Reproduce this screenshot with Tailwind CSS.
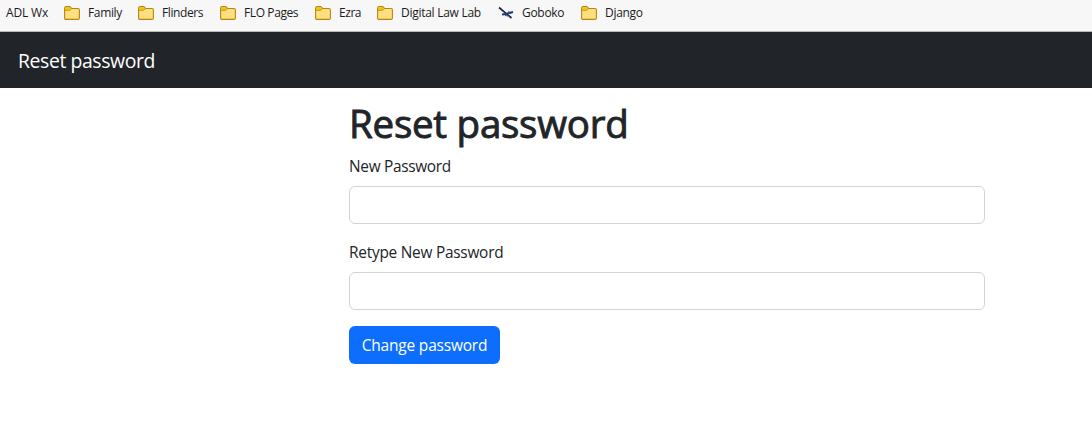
<!DOCTYPE html>
<html lang="en">
<head>
<meta charset="utf-8">
<title>Reset password</title>
<script src="https://cdn.jsdelivr.net/npm/@tailwindcss/browser@4"></script>
</head>
<body class="h-[421px] overflow-hidden bg-white font-['Open_Sans','Noto_Sans',sans-serif] text-[#212529]">
<svg class="hidden">
  <symbol id="folder" viewBox="0 0 16 14">
    <path d="M.6 2.2Q.6.6 2 .6h3.800L7.600 2.500H14q1.400 0 1.400 1.400v8q0 1.500-1.400 1.500H2Q.6 13.400 .6 12Z" fill="#ffdf80" stroke="#b8860b" stroke-width="1.100"/>
    <path d="M1.100 2.200Q1.100 1.100 2 1.100h3.600L7 2.600 5.700 4.100H1.100Z" fill="#f0c419"/>
    <path d="M.8 4.300h4.900L7.500 2.600" fill="none" stroke="#b8860b" stroke-width=".8"/>
  </symbol>
</svg>
<nav class="flex h-8 items-center border-b border-[#b9bab8] bg-[#f7f7f7] pb-[5px] pl-1.5 text-[12px] leading-4 whitespace-nowrap text-[#1b1b1b]">
  <div class="w-[58px] tracking-[-0.15px]">ADL Wx</div>
  <div class="flex w-[74px] items-center gap-2"><svg class="h-3.5 w-4 shrink-0"><use href="#folder"/></svg><span class="tracking-[-0.35px]">Family</span></div>
  <div class="flex w-[82px] items-center gap-2"><svg class="h-3.5 w-4 shrink-0"><use href="#folder"/></svg><span class="tracking-[-0.4px]">Flinders</span></div>
  <div class="flex w-[95px] items-center gap-2"><svg class="h-3.5 w-4 shrink-0"><use href="#folder"/></svg><span class="tracking-[-0.4px]">FLO Pages</span></div>
  <div class="flex w-[62px] items-center gap-2"><svg class="h-3.5 w-4 shrink-0"><use href="#folder"/></svg><span class="tracking-[-0.45px]">Ezra</span></div>
  <div class="flex w-[121px] items-center gap-2"><svg class="h-3.5 w-4 shrink-0"><use href="#folder"/></svg><span class="tracking-[-0.27px]">Digital Law Lab</span></div>
  <div class="flex w-[83px] items-center gap-2">
    <svg class="h-3.5 w-4 shrink-0" viewBox="0 0 16 14"><path d="M1 1.500 13.500 12" stroke="#1c2540" stroke-width="1.700"/><path d="M4 8.500 8 8 15 6" fill="none" stroke="#21396f" stroke-width="2.200"/><path d="m10.500 4.800 2 3.200M7 9.500l3 .5" stroke="#34518c"/></svg>
    <span class="tracking-[-0.3px]">Goboko</span></div>
  <div class="flex items-center gap-2"><svg class="h-3.5 w-4 shrink-0"><use href="#folder"/></svg><span class="tracking-[-0.3px]">Django</span></div>
</nav>
<header class="flex h-14 items-center bg-[#212529] pt-px pl-[18px] text-[19.4px] leading-[30px] tracking-[-0.4px] text-white"><span>Reset password</span></header>
<main class="ml-[349px] w-[636px] pt-3">
  <h1 class="h-12 text-[38.5px] leading-[46px] font-medium tracking-[-0.25px] whitespace-nowrap [-webkit-text-stroke:0.9px_#212529]"><span>Reset password</span></h1>
  <form>
    <label for="p1" class="mt-1.5 block h-6 text-[15.4px] leading-[26px]"><span class="tracking-[-0.3px]">New Password</span></label>
    <input id="p1" type="password" class="mt-2 block h-[38px] w-full rounded-md border border-[#ced4da] bg-white px-3">
    <label for="p2" class="mt-4 block h-6 text-[15.4px] leading-[26px]"><span class="tracking-[-0.24px]">Retype New Password</span></label>
    <input id="p2" type="password" class="mt-2 block h-[38px] w-full rounded-md border border-[#ced4da] bg-white px-3">
    <button type="button" class="mt-4 block h-[38px] w-[151px] rounded-md bg-[#0d6efd] text-[15.5px] leading-6 whitespace-nowrap text-white"><span class="tracking-[-0.2px]">Change password</span></button>
  </form>
</main>
</body>
</html>
